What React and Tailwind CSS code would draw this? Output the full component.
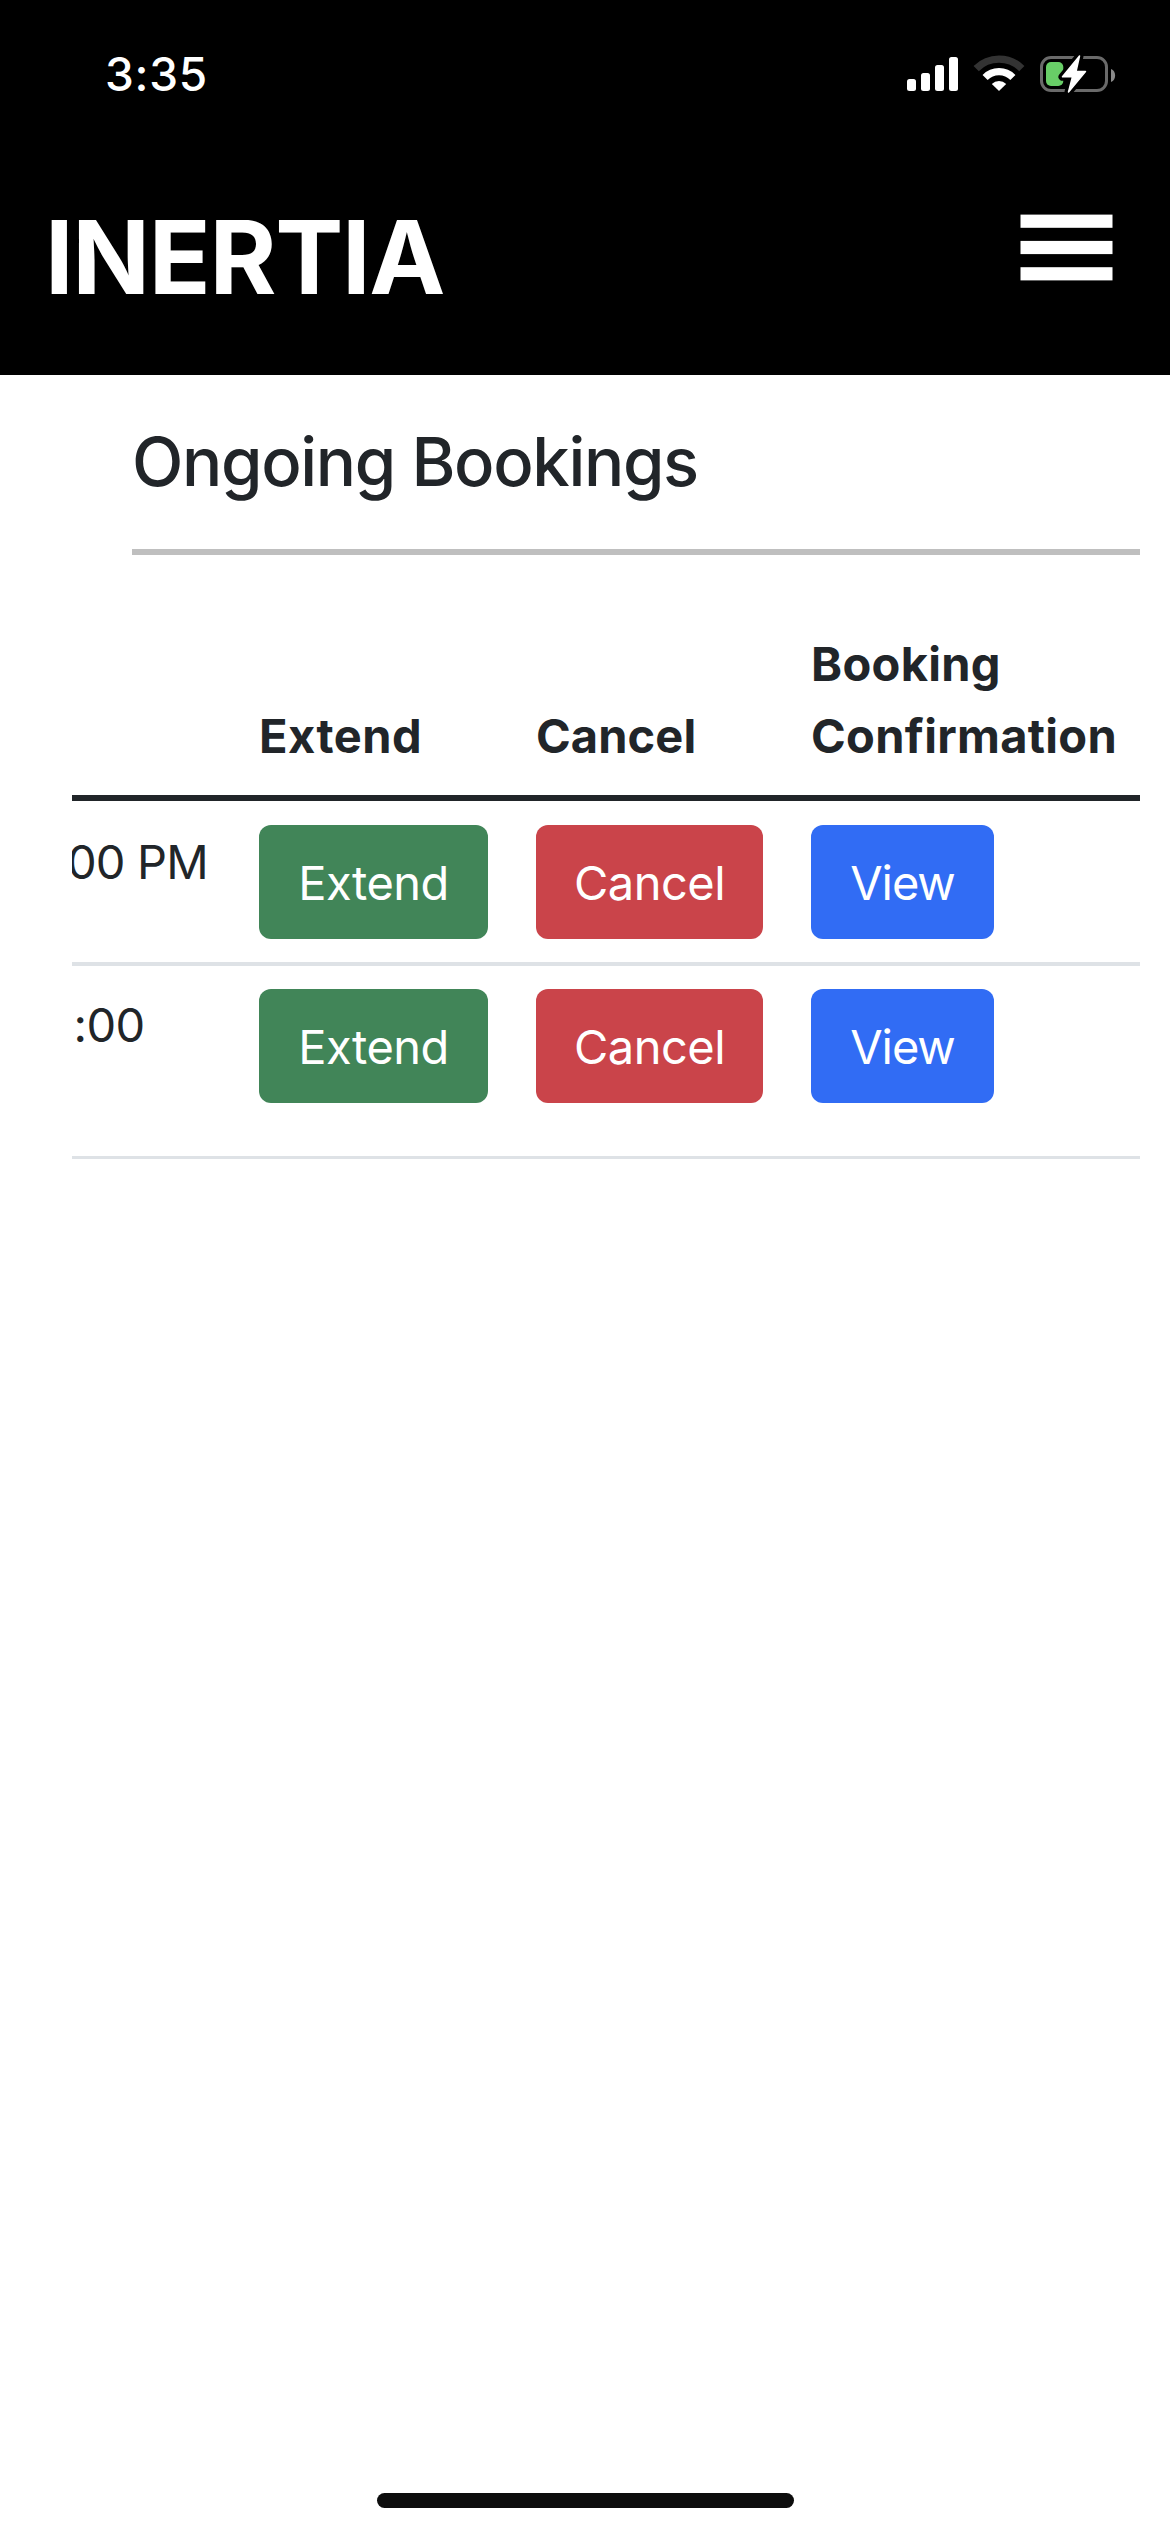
function StatusIcons() {
  return (
    <svg className="h-[48px] w-[216px]" viewBox="904 50 216 48" fill="none">
      <g fill="#fff">
        <rect x="907" y="79" width="9" height="12" rx="2.5" />
        <rect x="921" y="73" width="9" height="18" rx="2.5" />
        <rect x="935" y="65" width="9" height="26" rx="2.5" />
        <rect x="949" y="57" width="9" height="34" rx="2.5" />
      </g>
      <path d="M976.2 68.6A32.2 32.2 0 0 1 1021.8 68.6" stroke="#333" strokeWidth="7.4" />
      <path d="M985.1 77.5A19.6 19.6 0 0 1 1012.9 77.5" stroke="#fff" strokeWidth="7.2" />
      <path d="M991.8 83.9A10.2 10.2 0 0 1 1006.2 83.9L999 91Z" fill="#fff" />
      <rect x="1041.5" y="57.5" width="65" height="33" rx="9.5" stroke="#6a6a6a" strokeWidth="3" />
      <rect x="1046" y="62" width="17.3" height="24" rx="5" fill="#68ce67" />
      <path d="M1111 69c5.500 2 5.500 11 0 13Z" fill="#8a8a8a" />
      <path d="M1079.500 56 1062.500 76.800H1072.500L1068.500 92 1085.500 71.500H1076Z" fill="#fff" stroke="#000" strokeWidth="8" strokeLinejoin="round" />
      <path d="M1079.500 56 1062.500 76.800H1072.500L1068.500 92 1085.500 71.500H1076Z" fill="#fff" stroke="#fff" strokeWidth="1.500" strokeLinejoin="round" />
    </svg>
  );
}

function Button({ className, children }) {
  return (
    <button className={`flex h-[114px] items-center justify-center rounded-[12px] pt-0.5 font-normal text-white ${className}`}>
      {children}
    </button>
  );
}

function BookingRow({ className, time, timeClass }) {
  return (
    <div className={`grid grid-cols-[163px_277px_275px_353px] items-start border-[#dee2e6] ${className}`}>
      <div className="overflow-hidden whitespace-nowrap">
        <div className={timeClass}>{time}</div>
      </div>
      <div className="px-6">
        <Button className="w-[229px] bg-[#418558] tracking-[-0.5px]">Extend</Button>
      </div>
      <div className="px-6">
        <Button className="w-[227px] bg-[#ca444a] tracking-[-0.5px]">Cancel</Button>
      </div>
      <div className="px-6">
        <Button className="w-[183px] bg-[#316cf4] tracking-[-1.1px]">View</Button>
      </div>
    </div>
  );
}

export default function App() {
  return (
    <div className="flex h-[2532px] w-[1170px] flex-col overflow-hidden bg-white font-['Inter',sans-serif] text-[#212529]">
      <header className="h-[375px] shrink-0 bg-black text-white">
        <div className="flex h-[132px] items-start justify-between pr-[50px] pl-[105px]">
          <span className="mt-11 text-[46px] leading-[60px] font-medium tracking-[0.7px]">3:35</span>
          <div className="mt-[50px]">
            <StatusIcons />
          </div>
        </div>
        <nav className="flex items-start justify-between pr-[56px] pl-[45px]">
          <span className="mt-[65px] text-[102px] leading-[120px] font-bold tracking-[-1.3px]">INERTIA</span>
          <button className="mt-[82px]" aria-label="Menu">
            <svg className="h-[68px] w-[94px]" viewBox="1020 214 94 68" fill="#fff">
              <rect x="1020.500" y="214.600" width="92" height="13.200" />
              <rect x="1020.500" y="240.900" width="92" height="13.200" />
              <rect x="1020.500" y="267.200" width="92" height="13.200" />
            </svg>
          </button>
        </nav>
      </header>

      <main className="flex-1 pr-[30px] pl-[72px]">
        <div className="ml-[60px]">
          <h1 className="pt-[47px] text-[67px] leading-[80px] font-medium tracking-[-1.35px]">Ongoing Bookings</h1>
          <hr className="mt-[47px] h-1.5 border-0 bg-[#bfbfbf]" />
        </div>

        <div className="mt-[73px] text-[47px] leading-[72px]">
          <div className="grid grid-cols-[163px_277px_275px_353px] items-end border-b-6 border-[#212529] pb-[23px] font-bold">
            <div />
            <div className="px-6 tracking-[0.5px]">Extend</div>
            <div className="px-6 tracking-[0.1px]">Cancel</div>
            <div className="px-6 tracking-[0.3px]">
              Booking
              <br />
              Confirmation
            </div>
          </div>
          <BookingRow className="h-[165px] border-b-4 pt-6" time="00 PM" timeClass="-ml-[5px] pt-px tracking-[-0.8px]" />
          <BookingRow className="h-[193px] border-b-3 pt-[23px]" time=":00" timeClass="ml-[1.5px] tracking-[-0.6px]" />
        </div>
      </main>

      <footer className="flex h-[39px] shrink-0 items-start justify-center">
        <div className="h-[15px] w-[417px] rounded-full bg-[#0d0d0d]" />
      </footer>
    </div>
  );
}
